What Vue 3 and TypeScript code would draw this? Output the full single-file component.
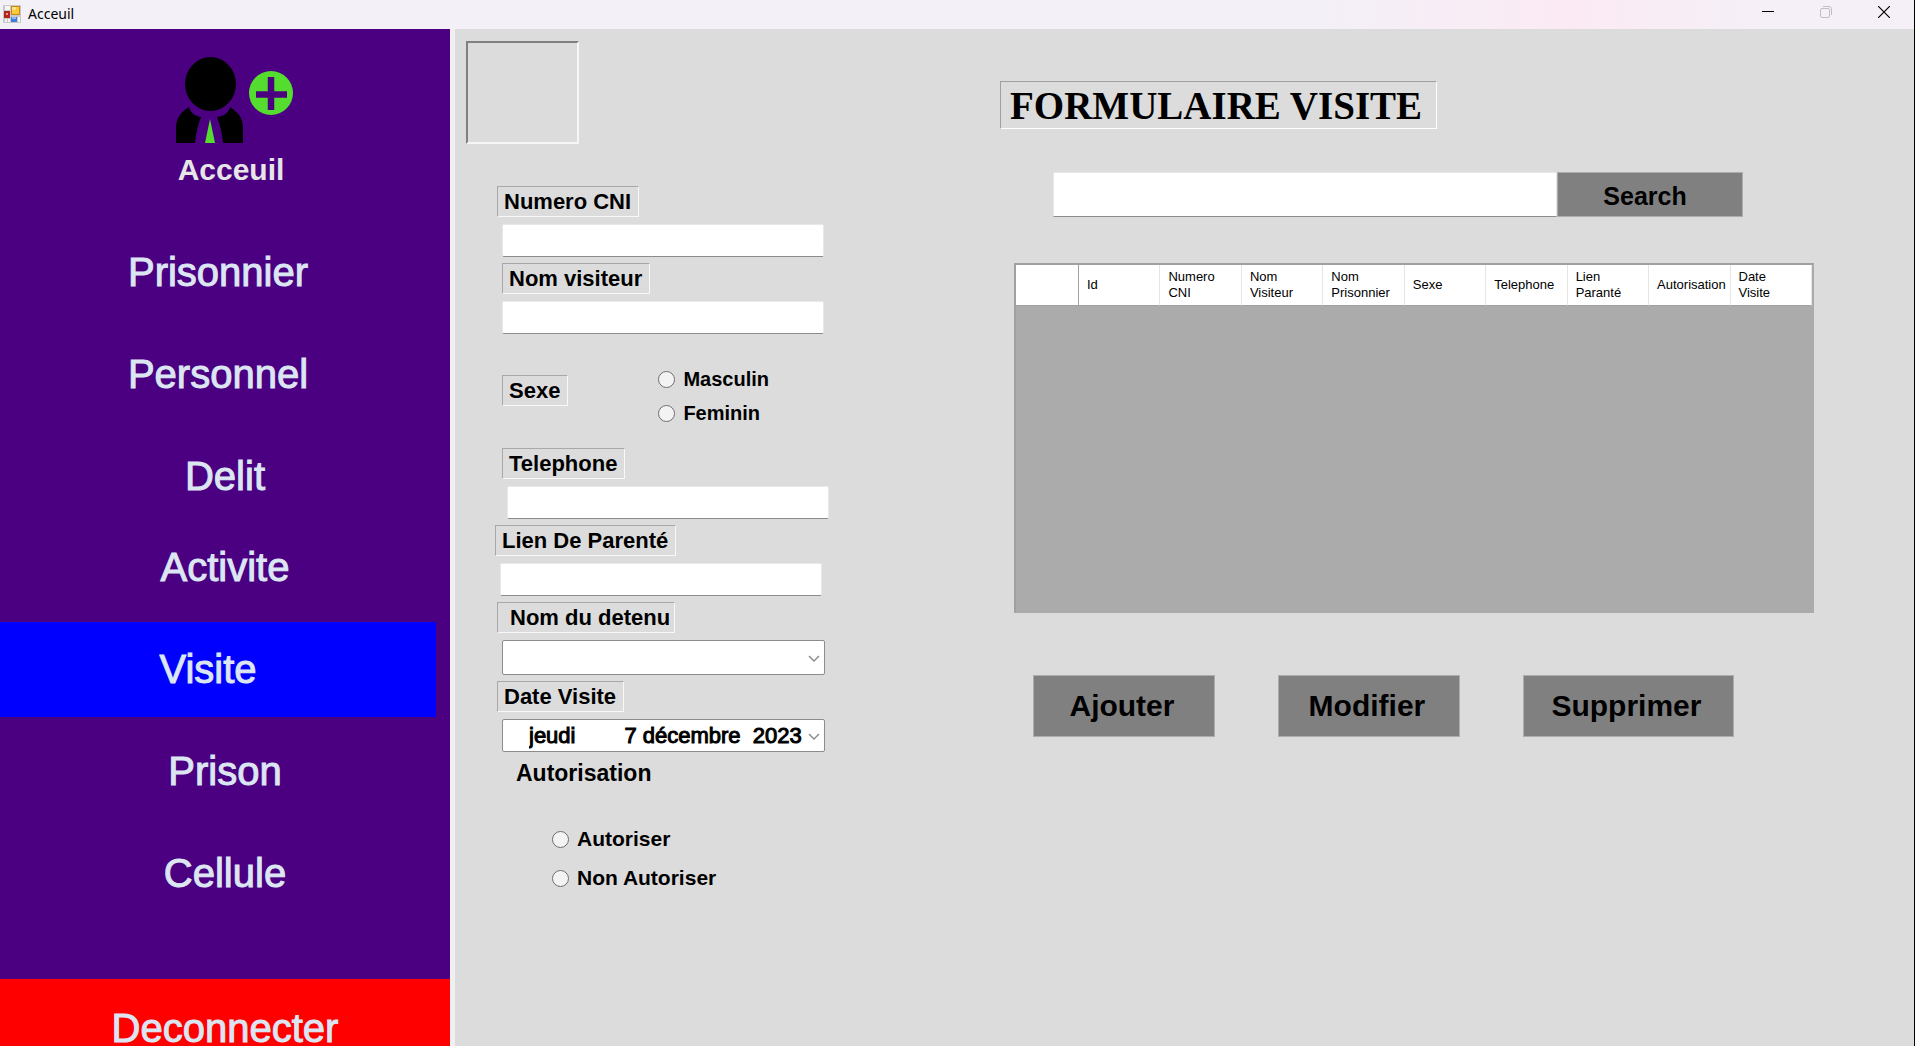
<script setup lang="ts">
import { ref } from 'vue'

interface NavItem {
  label: string
  narrow?: boolean
  active?: boolean
}

const navGroups: NavItem[][] = [
  [{ label: 'Prisonnier', narrow: true }, { label: 'Personnel', narrow: true }, { label: 'Delit' }],
  [{ label: 'Activite' }, { label: 'Visite', narrow: true, active: true }, { label: 'Prison' }, { label: 'Cellule' }],
]

const columns: string[] = [
  'Id',
  'Numero CNI',
  'Nom Visiteur',
  'Nom Prisonnier',
  'Sexe',
  'Telephone',
  'Lien Paranté',
  'Autorisation',
  'Date Visite',
]

const cni = ref('')
const visiteur = ref('')
const sexe = ref('')
const telephone = ref('')
const lien = ref('')
const detenu = ref('')
const dateVisite = ref('jeudi        7 décembre  2023')
const autorisation = ref('')
const recherche = ref('')
</script>

<template>
  <div class="window">
    <header class="titlebar">
      <svg class="app-icon" width="18" height="18" viewBox="0 0 18 18" aria-hidden="true">
        <rect width="18" height="18" rx="1" fill="#c9c9cc" />
        <rect x="2" y="1" width="5" height="4" fill="#f6f6f6" />
        <rect x="1" y="6" width="6" height="7" fill="#b3261e" />
        <rect x="3" y="8" width="2" height="2" fill="#e89a92" />
        <rect x="8" y="1" width="9" height="9" fill="#c98a12" />
        <rect x="9" y="2" width="7" height="7" fill="#fbc93b" />
        <rect x="9" y="2" width="4" height="3" fill="#fde38c" />
        <rect x="8" y="12" width="6" height="5" fill="#3f7fdc" />
        <rect x="9" y="12" width="4" height="2" fill="#8db8f2" />
        <rect x="2" y="14" width="2" height="3" fill="#f6f6f6" />
        <rect x="5" y="14" width="2" height="3" fill="#f6f6f6" />
        <rect x="15" y="12" width="2" height="5" fill="#f6f6f6" />
      </svg>
      <span class="app-title">Acceuil</span>
      <div class="controls">
        <button type="button" aria-label="Réduire">
          <svg width="12" height="12" viewBox="0 0 12 12"><path d="M0 5.5h12" stroke="#000" /></svg>
        </button>
        <button type="button" aria-label="Restaurer" disabled>
          <svg width="12" height="12" viewBox="0 0 12 12" fill="none" stroke="#c3bec6">
            <rect x="0.5" y="2.5" width="9" height="9" rx="1.5" />
            <path d="M3 0.5h6a2.5 2.5 0 0 1 2.5 2.5v6" />
          </svg>
        </button>
        <button type="button" aria-label="Fermer">
          <svg width="12" height="12" viewBox="0 0 12 12"><path d="M0 0l12 12M12 0L0 12" stroke="#000" stroke-width="1.2" /></svg>
        </button>
      </div>
    </header>

    <div class="body">
      <aside class="sidebar">
        <div class="brand">
          <svg width="117" height="86" viewBox="0 0 117 86" aria-hidden="true">
            <ellipse cx="34.5" cy="27" rx="25.5" ry="27" />
            <path d="M13 50C4 56 0 61 0 72V86H19C20 76 22 68 25 60C18 59 14 55 13 50Z" />
            <path d="M54 50C63 56 67 61 67 72V86H47C46 76 44 68 41 60C49 59 53 55 54 50Z" />
            <path d="M34 62L39 86H29Z" fill="#54dd2e" />
            <circle cx="95" cy="36" r="22" fill="#54dd2e" />
            <path d="M95 20V53M80 37.500H111" stroke="#4b0082" stroke-width="6.500" />
          </svg>
          <span>Acceuil</span>
        </div>
        <nav>
          <div v-for="(group, g) in navGroups" :key="g" class="nav-group">
            <button
              v-for="item in group"
              :key="item.label"
              type="button"
              class="nav-item"
              :class="{ narrow: item.narrow, active: item.active }"
            >
              {{ item.label }}
            </button>
          </div>
        </nav>
        <button type="button" class="nav-item logout">Deconnecter</button>
      </aside>

      <main class="content">
        <form class="visit-form" @submit.prevent>
          <div class="photo"></div>

          <div class="field">
            <label class="tag" for="cni">Numero CNI</label>
            <input id="cni" v-model="cni" class="box" type="text" />
          </div>
          <div class="field">
            <label class="tag inset" for="visiteur">Nom visiteur</label>
            <input id="visiteur" v-model="visiteur" class="box" type="text" />
          </div>

          <div class="gender" role="radiogroup" aria-labelledby="sexe-label">
            <span id="sexe-label" class="tag">Sexe</span>
            <div class="gender-options">
              <label class="choice"><input v-model="sexe" type="radio" name="sexe" value="m" />Masculin</label>
              <label class="choice"><input v-model="sexe" type="radio" name="sexe" value="f" />Feminin</label>
            </div>
          </div>

          <div class="field indent">
            <label class="tag" for="telephone">Telephone</label>
            <input id="telephone" v-model="telephone" class="box" type="text" />
          </div>
          <div class="field outdent">
            <label class="tag" for="lien">Lien De Parenté</label>
            <input id="lien" v-model="lien" class="box" type="text" />
          </div>
          <div class="field">
            <label class="tag lead" for="detenu">Nom du detenu</label>
            <div class="picker">
              <select id="detenu" v-model="detenu"></select>
              <svg class="chevron" width="12" height="8" viewBox="0 0 12 8"><path d="M1 1l5 5l5-5" fill="none" stroke="#888" stroke-width="1.4" /></svg>
            </div>
          </div>
          <div class="field">
            <label class="tag" for="date">Date Visite</label>
            <div class="picker date">
              <input id="date" v-model="dateVisite" type="text" />
              <svg class="chevron" width="12" height="8" viewBox="0 0 12 8"><path d="M1 1l5 5l5-5" fill="none" stroke="#888" stroke-width="1.4" /></svg>
            </div>
          </div>

          <div class="permission" role="radiogroup" aria-labelledby="auto-label">
            <span id="auto-label" class="permission-title">Autorisation</span>
            <label class="choice"><input v-model="autorisation" type="radio" name="auto" value="oui" />Autoriser</label>
            <label class="choice"><input v-model="autorisation" type="radio" name="auto" value="non" />Non Autoriser</label>
          </div>
        </form>

        <section class="records">
          <h1>FORMULAIRE VISITE</h1>
          <form class="search" @submit.prevent>
            <input v-model="recherche" type="text" aria-label="Search" />
            <button type="submit">Search</button>
          </form>
          <div class="grid">
            <table>
              <thead>
                <tr>
                  <td class="row-head"></td>
                  <th v-for="c in columns" :key="c" scope="col">{{ c }}</th>
                </tr>
              </thead>
            </table>
          </div>
          <div class="actions">
            <button type="button">Ajouter</button>
            <button type="button">Modifier</button>
            <button type="button" class="wide">Supprimer</button>
          </div>
        </section>
      </main>
    </div>
  </div>
</template>

<style>
body {
  margin: 0;
}
</style>

<style scoped>
* {
  box-sizing: border-box;
}

.window {
  display: flex;
  flex-direction: column;
  height: 100vh;
  overflow: hidden;
  border-right: 1px solid #000;
  background: #dcdcdc;
  color: #000;
  font-family: "Liberation Sans", Arial, sans-serif;
}

button,
input,
select {
  margin: 0;
  font-family: inherit;
  color: inherit;
}

/* Title bar */
.titlebar {
  display: flex;
  flex: none;
  align-items: center;
  height: 29px;
  padding: 0 1px 2px 3px;
  background: linear-gradient(90deg, #f3f0f8 0%, #f3f0f8 68%, #fbeaf3 82%, #f5eff7 92%, #f5eff7 100%);
}

.app-title {
  margin-left: 7px;
  font: 14px "Noto Sans", sans-serif;
}

.controls {
  display: flex;
  align-self: stretch;
  margin-left: auto;
}

.controls button {
  display: flex;
  align-items: center;
  justify-content: center;
  width: 58px;
  padding: 0 0 3px;
  border: 0;
  background: none;
}

.body {
  display: flex;
  flex: 1;
  min-height: 0;
}

/* Sidebar */
.sidebar {
  display: flex;
  flex: none;
  flex-direction: column;
  width: 455px;
  border-right: 5px solid #f0f0f0;
  background: #4b0082;
  overflow: hidden;
}

.brand {
  display: flex;
  flex: none;
  flex-direction: column;
  align-items: center;
  gap: 9px;
  height: 196px;
  padding: 28px 0 0 18px;
  color: #e6e6e6;
  font-size: 30px;
  font-weight: bold;
  line-height: 36px;
}

.brand span {
  margin-right: 6px;
}

nav,
.nav-group {
  display: flex;
  flex: none;
  flex-direction: column;
}

.nav-group {
  gap: 7px;
}

.nav-group + .nav-group {
  margin-top: -4px;
}

.nav-item {
  flex: none;
  width: 100%;
  height: 95px;
  padding: 0;
  border: 0;
  background: none;
  color: #dce6f2;
  font-size: 40px;
  -webkit-text-stroke: 1px #dce6f2;
}

.nav-item.narrow {
  width: 436px;
}

.nav-item.active {
  padding-right: 20px;
  background: #0000ff;
}

.nav-item.logout {
  flex: 1 0 auto;
  height: auto;
  margin-top: 58px;
  padding-top: 30px;
  background: #ff0000;
  line-height: 36px;
}

/* Form */
.content {
  display: grid;
  flex: 1;
  grid-template-columns: 545px 1fr;
  align-items: start;
  min-width: 0;
}

.visit-form {
  display: flex;
  flex-direction: column;
  align-items: flex-start;
  padding: 12px 0 0 40px;
}

.photo {
  width: 113px;
  height: 103px;
  margin: 0 0 42px -29px;
  border: 2px solid;
  border-color: #808080 #f6f6f6 #f6f6f6 #808080;
}

.field {
  display: flex;
  flex-direction: column;
  align-items: flex-start;
  gap: 7px;
  margin-bottom: 6px;
  padding-left: 2px;
}

.field.indent {
  padding-left: 7px;
}

.field.outdent {
  padding-left: 0;
}

.tag {
  height: 31px;
  padding: 0 7px 0 6px;
  border: 1px solid;
  border-color: #a8a8a8 #f8f8f8 #f8f8f8 #a8a8a8;
  font-size: 22px;
  font-weight: bold;
  line-height: 30px;
}

.tag.inset {
  margin-left: 5px;
}

.tag.lead {
  padding: 0 4px 0 12px;
}

.box {
  width: 322px;
  height: 33px;
  margin-left: 5px;
  padding: 0 6px;
  border: 1px solid #e8e8e8;
  border-bottom: 1px solid #8c8c8c;
  border-radius: 2px;
  background: #fff;
  font-size: 20px;
}

.gender {
  display: flex;
  gap: 90px;
  margin: 28px 0 24px 7px;
}

.gender .tag {
  margin-top: 7px;
}

.gender-options {
  display: flex;
  flex-direction: column;
  gap: 12px;
}

.choice {
  display: flex;
  align-items: center;
  gap: 8px;
  font-size: 20px;
  font-weight: bold;
  line-height: 22px;
}

.choice input {
  width: 17px;
  height: 17px;
  border: 1px solid #6e6e6e;
  border-radius: 50%;
  background: #f3f3f3;
  appearance: none;
}

.choice input:checked {
  border: 5px solid #0067c0;
}

.picker {
  position: relative;
  width: 323px;
  height: 35px;
  margin-left: 5px;
}

.picker.date {
  height: 33px;
}

.picker select,
.picker input {
  width: 100%;
  height: 100%;
  padding: 0 0 0 26px;
  border: 1px solid #8c8c8c;
  border-radius: 2px;
  background: #fff;
  appearance: none;
  font-size: 22px;
  -webkit-text-stroke: 1px #000;
}

.chevron {
  position: absolute;
  top: 50%;
  right: 5px;
  margin-top: -3px;
  pointer-events: none;
}

.permission {
  display: flex;
  flex-direction: column;
  padding-left: 57px;
}

.permission-title {
  margin: 1px 0 41px -36px;
  font-size: 23px;
  font-weight: bold;
  line-height: 28px;
}

.permission .choice {
  margin-bottom: 17px;
  font-size: 21px;
}

/* Records */
.records {
  display: flex;
  flex-direction: column;
  align-items: stretch;
  padding: 52px 100px 0 14px;
}

h1 {
  align-self: flex-start;
  height: 48px;
  margin: 0 0 43px -14px;
  padding: 0 14px 0 9px;
  border: 1px solid;
  border-color: #a0a0a0 #fff #fff #a0a0a0;
  font: bold 39px/48px "Liberation Serif", "Times New Roman", serif;
  white-space: nowrap;
}

.search {
  display: flex;
  height: 45px;
  margin: 0 71px 46px 39px;
}

.search input {
  flex: 1;
  min-width: 0;
  padding: 0 8px;
  border: 1px solid #e8e8e8;
  border-bottom-color: #8c8c8c;
  background: #fff;
  font-size: 24px;
}

.search button {
  width: 186px;
  padding: 3px 10px 0 0;
  border: 1px solid #adadad;
  background: #808080;
  font-size: 25px;
  font-weight: bold;
}

.grid {
  height: 350px;
  border: 2px solid #a0a0a0;
  border-color: #a0a0a0 #ababab #ababab #a0a0a0;
  background: #ababab;
}

table {
  width: 100%;
  border-collapse: separate;
  border-spacing: 0;
  table-layout: fixed;
}

.row-head,
th {
  height: 41px;
  padding: 0 12px 0 8px;
  border-right: 1px solid #e5e5e5;
  border-bottom: 1px solid #a0a0a0;
  background: #fff;
}

.row-head {
  width: 63px;
  border-right-color: #a0a0a0;
}

th {
  font-size: 13px;
  font-weight: normal;
  line-height: 16px;
  text-align: left;
}

.actions {
  display: flex;
  gap: 63px;
  margin: 62px 80px 0 19px;
}

.actions button {
  flex: 181 1 0;
  height: 62px;
  padding: 0 4px 0 0;
  border: 1px solid #adadad;
  background: #808080;
  font-size: 30px;
  font-weight: bold;
}

.actions .wide {
  flex-grow: 211;
}
</style>
